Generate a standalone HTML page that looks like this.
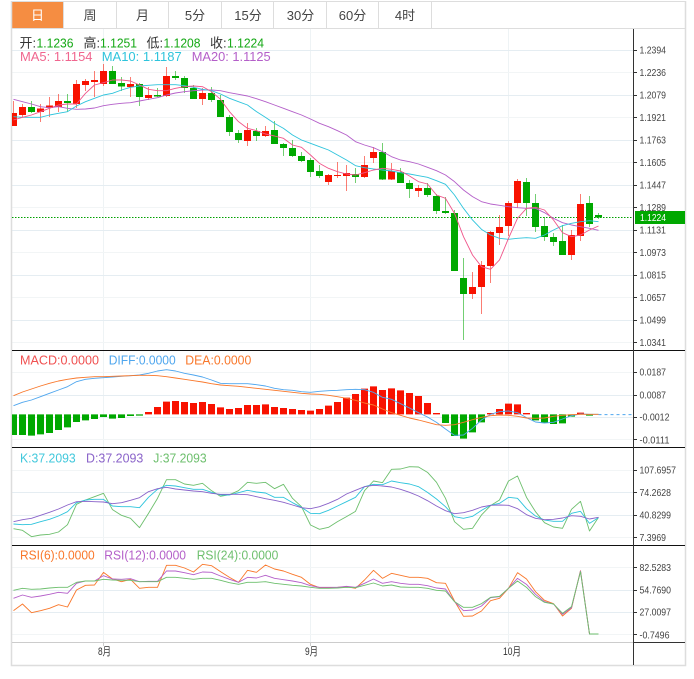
<!DOCTYPE html>
<html>
<head>
<meta charset="utf-8">
<style>
html,body{margin:0;padding:0;background:#fff;width:694px;height:679px;overflow:hidden}
svg{display:block}
text{font-family:"Liberation Sans","Noto Sans CJK SC",sans-serif}
.a{font-size:10px;fill:#444}
.t{font-size:13px;fill:#444;text-anchor:middle}
polyline{fill:none;stroke-width:.9;vector-effect:non-scaling-stroke;stroke-linejoin:round}
</style>
</head>
<body>
<svg width="694" height="679" viewBox="0 0 694 679" xmlns="http://www.w3.org/2000/svg">
<defs><clipPath id="c"><rect x="12" y="29" width="621" height="613"/></clipPath></defs>

<!-- tabs -->
<rect x="12" y="2" width="51" height="26" fill="#f58d42"/>
<path d="M11 1.5H685.5" stroke="#ddd" fill="none"/>
<path d="M11 28.5H685.5M63.5 2V28M116.5 2V28M168.5 2V28M221.5 2V28M273.5 2V28M326.5 2V28M378.5 2V28M431.5 2V28" stroke="#ddd" fill="none"/>
<text class="t" x="37.5" y="20" style="fill:#fff">日</text>
<text class="t" x="90" y="20">周</text>
<text class="t" x="142.5" y="20">月</text>
<text class="t" x="195" y="20">5分</text>
<text class="t" x="248" y="20">15分</text>
<text class="t" x="300.5" y="20">30分</text>
<text class="t" x="352.5" y="20">60分</text>
<text class="t" x="405" y="20">4时</text>

<!-- grid -->
<path stroke="#eef3f5" fill="none" d="M103.5 29V642M310.5 29V642M508.5 29V642"/>
<path stroke="#e5edf2" fill="none" d="M12 50.5H633M12 95.5H633M12 140.5H633M12 185.5H633M12 230.5H633M12 275.5H633M12 320.5H633M12 395.5H633M12 417.5H633M12 492.5H633M12 515.5H633M12 590.5H633M12 612.5H633"/>
<path stroke="#f2f5f6" fill="none" d="M12 72.5H633M12 117.5H633M12 162.5H633M12 207.5H633M12 252.5H633M12 297.5H633M12 342.5H633M12 372.5H633M12 439.5H633M12 470.5H633M12 537.5H633M12 567.5H633M12 634.5H633"/>

<!-- frame -->
<path stroke="#ddd" stroke-width="1.5" fill="none" d="M11.5 1V665.5H685.5V1"/>
<path stroke="#ccc" fill="none" d="M12 642.5H633M103.5 642V646M310.5 642V646M508.5 642V646"/>
<path stroke="#111" fill="none" d="M12 350.5H685M12 447.5H685M12 545.5H685"/>
<path stroke="#333" fill="none" d="M633.5 29V665M633 642.5H685"/>
<path stroke="#333" fill="none" d="M633 50.5h4M633 72.5h4M633 95.5h4M633 117.5h4M633 140.5h4M633 162.5h4M633 185.5h4M633 207.5h4M633 230.5h4M633 252.5h4M633 275.5h4M633 297.5h4M633 320.5h4M633 342.5h4M633 372.5h4M633 395.5h4M633 417.5h4M633 439.5h4M633 470.5h4M633 492.5h4M633 515.5h4M633 537.5h4M633 567.5h4M633 590.5h4M633 612.5h4M633 634.5h4"/>

<g clip-path="url(#c)">
<!-- current price -->
<path d="M12 217.5H633" stroke="#00a000" stroke-dasharray="1.5 1.5" fill="none"/>

<!-- wicks -->
<path stroke="#f81200" stroke-opacity=".55" fill="none" d="M13.5 101V126M22.5 104V117M40.5 104V122M49.5 97V117M58.5 94V112M76.5 80V108M85.5 79V91M94.5 71V97M103.5 64V86M130.5 77V97M148.5 87V100M166.5 67V97M202.5 88V105M247.5 123V146M265.5 126V137M328.5 174V185M337.5 162V178M346.5 165V191M364.5 156V178M373.5 147V163M391.5 163V180M418.5 185V197M472.5 272V299M481.5 261V314M490.5 231V283M499.5 215V245M508.5 201V236M517.5 179V208M571.5 230V260M580.5 194V241"/>
<path stroke="#00a800" stroke-opacity=".55" fill="none" d="M31.5 101V113M67.5 94V112M112.5 66V84M121.5 77V91M139.5 83V106M157.5 88V97M175.5 71V80M184.5 76V93M193.5 85V99M211.5 87V102M220.5 95V117M229.5 115V136M238.5 130V143M256.5 128V141M274.5 121V144M283.5 143V156M292.5 140V157M301.5 152V162M310.5 158V177M319.5 165V178M355.5 168V183M382.5 143V180M400.5 168V183M409.5 180V198M427.5 183V197M436.5 194V214M445.5 197V214M454.5 210V271M463.5 258V340M526.5 178V216M535.5 194V232M544.5 217V241M553.5 233V246M562.5 225V255M589.5 196V227M598.5 213V219"/>
<!-- bodies -->
<path fill="#f81200" d="M10 113h7V126h-7zM19 107h7V115h-7zM37 108.500h7V112h-7zM46 105.500h7V108h-7zM55 101h7V107h-7zM73 84h7V104h-7zM82 81h7V85h-7zM91 80h7V82h-7zM100 71h7V84h-7zM127 84h7V87h-7zM145 95h7V98h-7zM163 76h7V96h-7zM199 93h7V99h-7zM244 130h7V141h-7zM262 131h7V136h-7zM325 175h7V182h-7zM334 175h7V176h-7zM343 173h7V176h-7zM361 165h7V177h-7zM370 152h7V158h-7zM388 171h7V179.500h-7zM415 188h7V191h-7zM469 287h7V294h-7zM478 265h7V287h-7zM487 232h7V266h-7zM496 227h7V233h-7zM505 203h7V226h-7zM514 181h7V203h-7zM568 235h7V255h-7zM577 204h7V236h-7z"/>
<path fill="#00a800" d="M28 107h7V112h-7zM64 101h7V103h-7zM109 71h7V84h-7zM118 83h7V86.500h-7zM136 84h7V97h-7zM154 95h7V96.500h-7zM172 76h7V78h-7zM181 78h7V88h-7zM190 88h7V99h-7zM208 93h7V100h-7zM217 100h7V117h-7zM226 117h7V132h-7zM235 133h7V140h-7zM253 131h7V136h-7zM271 130h7V144h-7zM280 144h7V148h-7zM289 148h7V156h-7zM298 156h7V161h-7zM307 160h7V172h-7zM316 171h7V176h-7zM352 174h7V177h-7zM379 152h7V179.500h-7zM397 172h7V183h-7zM406 183h7V189h-7zM424 188h7V195h-7zM433 196h7V211h-7zM442 211h7V213h-7zM451 213h7V271h-7zM460 278h7V294h-7zM523 182h7V203h-7zM532 203h7V227h-7zM541 226h7V237h-7zM550 237h7V242h-7zM559 241h7V255h-7zM586 203h7V224h-7zM595 215h7V217.500h-7z"/>

<!-- MA lines: y values in 3x coords -->
<g transform="scale(1,.33333)">
<polyline stroke="#b45fc9" points="13.500,298 22.500,305 31.500,312 40.500,320 49.500,323 58.500,320 67.500,325 76.500,328 85.500,327 94.500,324 103.500,317 112.500,313 121.500,310 130.500,308 139.500,303 148.500,298 157.500,293 166.500,285 175.500,279 184.500,275 193.500,272 202.500,270 211.500,270 220.500,272 229.500,278 238.500,283 247.500,288 256.500,296 265.500,305 274.500,315 283.500,325 292.500,335 301.500,345 310.500,357 319.500,370 328.500,380 337.500,392 346.500,405 355.500,425 364.500,435 373.500,443 382.500,455 391.500,470 400.500,480 409.500,485 418.500,492 427.500,502 436.500,512 445.500,525 454.500,545 463.500,570 472.500,590 481.500,605 490.500,612 499.500,616 508.500,620 517.500,623 526.500,625 535.500,625 544.500,638 553.500,655 562.500,668 571.500,675 580.500,680 589.500,685 598.500,691"/>
<polyline stroke="#2ec4dc" points="13.500,350 22.500,352 31.500,352 40.500,352 49.500,345 58.500,340 67.500,335 76.500,318 85.500,305 94.500,295 103.500,285 112.500,280 121.500,270 130.500,262 139.500,258 148.500,256 157.500,254 166.500,254 175.500,254 184.500,257 193.500,262 202.500,268 211.500,272 220.500,282 229.500,295 238.500,305 247.500,315 256.500,335 265.500,352 274.500,370 283.500,385 292.500,405 301.500,420 310.500,430 319.500,440 328.500,450 337.500,465 346.500,480 355.500,497 364.500,503 373.500,507 382.500,510 391.500,513 400.500,518 409.500,522 418.500,527 427.500,532 436.500,542 445.500,553 454.500,585 463.500,625 472.500,660 481.500,688 490.500,705 499.500,715 508.500,718 517.500,715 526.500,713 535.500,715 544.500,705 553.500,690 562.500,677 571.500,670 580.500,665 589.500,662 598.500,665"/>
<polyline stroke="#f0558a" points="13.500,360 22.500,352 31.500,345 40.500,335 49.500,325 58.500,315 67.500,312 76.500,312 85.500,280 94.500,255 103.500,248 112.500,240 121.500,240 130.500,243 139.500,255 148.500,268 157.500,272 166.500,272 175.500,265 184.500,260 193.500,258 202.500,260 211.500,275 220.500,298 229.500,335 238.500,365 247.500,385 256.500,392 265.500,402 274.500,408 283.500,415 292.500,435 301.500,442 310.500,465 319.500,490 328.500,505 337.500,515 346.500,522 355.500,525 364.500,518 373.500,510 382.500,505 391.500,508 400.500,513 409.500,528 418.500,545 427.500,552 436.500,585 445.500,595 454.500,640 463.500,710 472.500,765 481.500,800 490.500,808 499.500,780 508.500,715 517.500,655 526.500,625 535.500,622 544.500,630 553.500,660 562.500,698 571.500,710 580.500,705 589.500,690 598.500,678"/>
</g>

<!-- MACD -->
<g transform="translate(0,345) scale(1,.33333)">
<path fill="#00a800" d="M10 208h7V270h-7zM19 208h7V270h-7zM28 208h7V272h-7zM37 208h7V268h-7zM46 208h7V264h-7zM55 208h7V255h-7zM64 208h7V247h-7zM73 208h7V231h-7zM82 208h7V226h-7zM91 208h7V222h-7zM100 208h7V216h-7zM109 208h7V221h-7zM118 208h7V219h-7zM127 208h7V213h-7zM136 208h7V212h-7zM442 208h7V234h-7zM451 208h7V273h-7zM460 208h7V281h-7zM469 208h7V262h-7zM478 208h7V232h-7zM532 208h7V226h-7zM541 208h7V234h-7zM550 208h7V237h-7zM559 208h7V235h-7zM568 208h7V215h-7zM586 208h7V212h-7z"/>
<path fill="#f81200" d="M145 201h7V208h-7zM154 186h7V208h-7zM163 170h7V208h-7zM172 168h7V208h-7zM181 171h7V208h-7zM190 174h7V208h-7zM199 171h7V208h-7zM208 177h7V208h-7zM217 187h7V208h-7zM226 192h7V208h-7zM235 189h7V208h-7zM244 180h7V208h-7zM253 180h7V208h-7zM262 178h7V208h-7zM271 186h7V208h-7zM280 189h7V208h-7zM289 192h7V208h-7zM298 195h7V208h-7zM307 197h7V208h-7zM316 192h7V208h-7zM325 182h7V208h-7zM334 171h7V208h-7zM343 158h7V208h-7zM352 147h7V208h-7zM361 131h7V208h-7zM370 124h7V208h-7zM379 135h7V208h-7zM388 130h7V208h-7zM397 136h7V208h-7zM406 144h7V208h-7zM415 153h7V208h-7zM424 174h7V208h-7zM433 204h7V208h-7zM487 204h7V208h-7zM496 192h7V208h-7zM505 176h7V208h-7zM514 178h7V208h-7zM523 204h7V208h-7zM577 203h7V208h-7z"/>
<polyline stroke="#4ea6ee" points="13.500,182 22.500,172 31.500,165 40.500,155 49.500,145 58.500,135 67.500,125 76.500,110 85.500,103 94.500,100 103.500,98 112.500,96 121.500,94 130.500,92 139.500,90 148.500,85 157.500,78 166.500,74 175.500,78 184.500,85 193.500,90 202.500,96 211.500,105 220.500,115 229.500,116 238.500,116 247.500,116 256.500,119 265.500,123 274.500,130 283.500,134 292.500,136 301.500,140 310.500,142 319.500,139 328.500,137 337.500,136 346.500,134 355.500,133 364.500,134 373.500,142 382.500,157 391.500,163 400.500,176 409.500,189 418.500,203 427.500,216 436.500,232 445.500,252 454.500,271 463.500,270 472.500,250 481.500,225 490.500,208 499.500,200 508.500,198 517.500,203 526.500,218 535.500,231 544.500,234 553.500,232 562.500,222 571.500,212 580.500,207 589.500,208 598.500,208"/>
<polyline stroke="#f9772a" points="13.500,152 22.500,141 31.500,132 40.500,123 49.500,115 58.500,108 67.500,103 76.500,99 85.500,97 94.500,95 103.500,95 112.500,94 121.500,93 130.500,92 139.500,91 148.500,91 157.500,92 166.500,95 175.500,99 184.500,103 193.500,107 202.500,111 211.500,116 220.500,120 229.500,122 238.500,124 247.500,127 256.500,130 265.500,133 274.500,136 283.500,139 292.500,142 301.500,145 310.500,147 319.500,148 328.500,151 337.500,155 346.500,160 355.500,166 364.500,174 373.500,180 382.500,192 391.500,203 400.500,211 409.500,219 418.500,225 427.500,232 436.500,239 445.500,241 454.500,239 463.500,232 472.500,224 481.500,217 490.500,212 499.500,210 508.500,211 517.500,214 526.500,219 535.500,220 544.500,219 553.500,214 562.500,211 571.500,209 580.500,208 589.500,208 598.500,208"/>
<path stroke="#4ea6ee" stroke-dasharray="3 3" fill="none" d="M598.500 209H633" vector-effect="non-scaling-stroke"/>
</g>

<!-- KDJ -->
<g transform="translate(0,450) scale(1,.33333)">
<polyline stroke="#6dbf6d" points="13.500,236 22.500,241 31.500,260 40.500,255 49.500,253 58.500,246 67.500,224 76.500,163 85.500,150 94.500,140 103.500,130 112.500,179 121.500,196 130.500,205 139.500,233 148.500,190 157.500,145 166.500,89 175.500,89 184.500,102 193.500,106 202.500,100 211.500,122 220.500,139 229.500,134 238.500,122 247.500,97 256.500,100 265.500,97 274.500,116 283.500,103 292.500,145 301.500,170 310.500,225 319.500,238 328.500,232 337.500,215 346.500,200 355.500,184 364.500,122 373.500,93 382.500,98 391.500,58 400.500,57 409.500,50 418.500,51 427.500,67 436.500,97 445.500,145 454.500,215 463.500,238 472.500,235 481.500,195 490.500,167 499.500,150 508.500,93 517.500,78 526.500,142 535.500,185 544.500,218 553.500,231 562.500,235 571.500,178 580.500,154 589.500,243 598.500,202"/>
<polyline stroke="#2ec4dc" points="13.500,222 22.500,224 31.500,223 40.500,215 49.500,208 58.500,198 67.500,185 76.500,158 85.500,150 94.500,148 103.500,148 112.500,168 121.500,170 130.500,170 139.500,173 148.500,142 157.500,118 166.500,106 175.500,108 184.500,113 193.500,118 202.500,118 211.500,127 220.500,135 229.500,135 238.500,128 247.500,121 256.500,126 265.500,129 274.500,142 283.500,142 292.500,158 301.500,172 310.500,190 319.500,191 328.500,181 337.500,168 346.500,155 355.500,142 364.500,110 373.500,103 382.500,104 391.500,93 400.500,98 409.500,102 418.500,110 427.500,127 436.500,147 445.500,170 454.500,200 463.500,205 472.500,199 481.500,181 490.500,166 499.500,160 508.500,142 517.500,145 526.500,176 535.500,198 544.500,210 553.500,214 562.500,214 571.500,190 580.500,184 589.500,220 598.500,203"/>
<polyline stroke="#8a63c9" points="13.500,215 22.500,209 31.500,205 40.500,196 49.500,187 58.500,177 67.500,165 76.500,155 85.500,154 94.500,155 103.500,156 112.500,161 121.500,158 130.500,151 139.500,143 148.500,125 157.500,116 166.500,112 175.500,117 184.500,120 193.500,123 202.500,125 211.500,130 220.500,133 229.500,133 238.500,133 247.500,134 256.500,140 265.500,146 274.500,151 283.500,157 292.500,165 301.500,173 310.500,176 319.500,170 328.500,160 337.500,148 346.500,132 355.500,121 364.500,110 373.500,106 382.500,108 391.500,111 400.500,118 409.500,127 418.500,138 427.500,152 436.500,168 445.500,182 454.500,191 463.500,188 472.500,181 481.500,171 490.500,166 499.500,165 508.500,166 517.500,176 526.500,194 535.500,205 544.500,209 553.500,208 562.500,204 571.500,197 580.500,199 589.500,207 598.500,202"/>
</g>

<!-- RSI -->
<g transform="translate(0,545) scale(1,.33333)">
<polyline stroke="#f9772a" points="13.500,197 22.500,177 31.500,203 40.500,197 49.500,190 58.500,179 67.500,186 76.500,135 85.500,121 94.500,120 103.500,82 112.500,102 121.500,110 130.500,103 139.500,130 148.500,127 157.500,127 166.500,61 175.500,61 184.500,69 193.500,81 202.500,58 211.500,62 220.500,80 229.500,97 238.500,112 247.500,76 256.500,82 265.500,60 274.500,72 283.500,78 292.500,88 301.500,97 310.500,118 319.500,128 328.500,128 337.500,127 346.500,125 355.500,130 364.500,105 373.500,76 382.500,100 391.500,85 400.500,91 409.500,97 418.500,97 427.500,100 436.500,113 445.500,115 454.500,168 463.500,214 472.500,213 481.500,198 490.500,167 499.500,160 508.500,130 517.500,83 526.500,102 535.500,140 544.500,166 553.500,176 562.500,213 571.500,190 580.500,77 589.500,267 598.500,267"/>
<polyline stroke="#b45fc9" points="13.500,160 22.500,150 31.500,157 40.500,153 49.500,148 58.500,142 67.500,145 76.500,115 85.500,108 94.500,108 103.500,92 112.500,102 121.500,103 130.500,101 139.500,110 148.500,109 157.500,109 166.500,78 175.500,78 184.500,83 193.500,89 202.500,81 211.500,82 220.500,93 229.500,103 238.500,112 247.500,97 256.500,99 265.500,91 274.500,100 283.500,104 292.500,108 301.500,113 310.500,122 319.500,127 328.500,127 337.500,127 346.500,124 355.500,127 364.500,115 373.500,102 382.500,115 391.500,110 400.500,115 409.500,118 418.500,118 427.500,122 436.500,129 445.500,132 454.500,170 463.500,197 472.500,195 481.500,183 490.500,158 499.500,155 508.500,130 517.500,100 526.500,118 535.500,148 544.500,170 553.500,177 562.500,208 571.500,188 580.500,78 589.500,267 598.500,267"/>
<polyline stroke="#6dbf6d" points="13.500,136 22.500,130 31.500,133 40.500,132 49.500,129 58.500,127 67.500,127 76.500,112 85.500,108 94.500,108 103.500,103 112.500,105 121.500,106 130.500,106 139.500,110 148.500,110 157.500,110 166.500,97 175.500,97 184.500,100 193.500,103 202.500,100 211.500,100 220.500,106 229.500,113 238.500,118 247.500,112 256.500,112 265.500,110 274.500,115 283.500,118 292.500,121 301.500,123 310.500,127 319.500,130 328.500,130 337.500,129 346.500,127 355.500,128 364.500,121 373.500,114 382.500,123 391.500,120 400.500,126 409.500,127 418.500,127 427.500,130 436.500,136 445.500,138 454.500,170 463.500,187 472.500,187 481.500,176 490.500,157 499.500,154 508.500,130 517.500,108 526.500,127 535.500,155 544.500,172 553.500,177 562.500,205 571.500,185 580.500,80 589.500,267 598.500,267"/>
</g>
</g>

<!-- legends -->
<g>
<text x="19.500" y="47.500" fill="#333" font-size="13">开:</text>
<text x="36.500" y="47.500" fill="#14a814" font-size="13" textLength="37" lengthAdjust="spacingAndGlyphs">1.1236</text>
<text x="83.500" y="47.500" fill="#333" font-size="13">高:</text>
<text x="100" y="47.500" fill="#14a814" font-size="13" textLength="37" lengthAdjust="spacingAndGlyphs">1.1251</text>
<text x="146.500" y="47.500" fill="#333" font-size="13">低:</text>
<text x="163.500" y="47.500" fill="#14a814" font-size="13" textLength="37" lengthAdjust="spacingAndGlyphs">1.1208</text>
<text x="210" y="47.500" fill="#333" font-size="13">收:</text>
<text x="227" y="47.500" fill="#14a814" font-size="13" textLength="37" lengthAdjust="spacingAndGlyphs">1.1224</text>

<text x="20" y="61" fill="#f0668f" font-size="13" textLength="72.500" lengthAdjust="spacingAndGlyphs">MA5: 1.1154</text>
<text x="101.700" y="61" fill="#2ec4dc" font-size="13" textLength="80" lengthAdjust="spacingAndGlyphs">MA10: 1.1187</text>
<text x="191.700" y="61" fill="#b45fc9" font-size="13" textLength="79" lengthAdjust="spacingAndGlyphs">MA20: 1.1125</text>

<text x="20" y="364.700" fill="#f05050" font-size="13" textLength="79" lengthAdjust="spacingAndGlyphs">MACD:0.0000</text>
<text x="108.700" y="364.700" fill="#4ea6ee" font-size="13" textLength="67" lengthAdjust="spacingAndGlyphs">DIFF:0.0000</text>
<text x="185.300" y="364.700" fill="#f9772a" font-size="13" textLength="66" lengthAdjust="spacingAndGlyphs">DEA:0.0000</text>

<text x="20" y="462.700" fill="#41c8dc" font-size="13" textLength="55.700" lengthAdjust="spacingAndGlyphs">K:37.2093</text>
<text x="86" y="462.700" fill="#8a63c9" font-size="13" textLength="57.300" lengthAdjust="spacingAndGlyphs">D:37.2093</text>
<text x="153.300" y="462.700" fill="#6dbf6d" font-size="13" textLength="53.400" lengthAdjust="spacingAndGlyphs">J:37.2093</text>

<text x="20" y="559.300" fill="#f9772a" font-size="13" textLength="74.700" lengthAdjust="spacingAndGlyphs">RSI(6):0.0000</text>
<text x="104.300" y="559.300" fill="#b45fc9" font-size="13" textLength="81.700" lengthAdjust="spacingAndGlyphs">RSI(12):0.0000</text>
<text x="196.700" y="559.300" fill="#6dbf6d" font-size="13" textLength="81.600" lengthAdjust="spacingAndGlyphs">RSI(24):0.0000</text>
</g>

<!-- y axis labels -->
<g>
<text class="a" x="639.500" y="53.500" textLength="26.500" lengthAdjust="spacingAndGlyphs">1.2394</text>
<text class="a" x="639.500" y="76" textLength="26.500" lengthAdjust="spacingAndGlyphs">1.2236</text>
<text class="a" x="639.500" y="98.500" textLength="26.500" lengthAdjust="spacingAndGlyphs">1.2079</text>
<text class="a" x="639.500" y="121" textLength="26.500" lengthAdjust="spacingAndGlyphs">1.1921</text>
<text class="a" x="639.500" y="143.500" textLength="26.500" lengthAdjust="spacingAndGlyphs">1.1763</text>
<text class="a" x="639.500" y="166" textLength="26.500" lengthAdjust="spacingAndGlyphs">1.1605</text>
<text class="a" x="639.500" y="188.500" textLength="26.500" lengthAdjust="spacingAndGlyphs">1.1447</text>
<text class="a" x="639.500" y="211" textLength="26.500" lengthAdjust="spacingAndGlyphs">1.1289</text>
<text class="a" x="639.500" y="233.500" textLength="26.500" lengthAdjust="spacingAndGlyphs">1.1131</text>
<text class="a" x="639.500" y="256" textLength="26.500" lengthAdjust="spacingAndGlyphs">1.0973</text>
<text class="a" x="639.500" y="278.500" textLength="26.500" lengthAdjust="spacingAndGlyphs">1.0815</text>
<text class="a" x="639.500" y="301" textLength="26.500" lengthAdjust="spacingAndGlyphs">1.0657</text>
<text class="a" x="639.500" y="323.500" textLength="26.500" lengthAdjust="spacingAndGlyphs">1.0499</text>
<text class="a" x="639.500" y="346" textLength="26.500" lengthAdjust="spacingAndGlyphs">1.0341</text>
<text class="a" x="639.500" y="375.500" textLength="26.500" lengthAdjust="spacingAndGlyphs">0.0187</text>
<text class="a" x="639.500" y="398.500" textLength="26.500" lengthAdjust="spacingAndGlyphs">0.0087</text>
<text class="a" x="639.500" y="420.500" textLength="30" lengthAdjust="spacingAndGlyphs">-0.0012</text>
<text class="a" x="639.500" y="443.500" textLength="30" lengthAdjust="spacingAndGlyphs">-0.0111</text>
<text class="a" x="639.500" y="473.500" textLength="36.500" lengthAdjust="spacingAndGlyphs">107.6957</text>
<text class="a" x="639.500" y="496" textLength="31.500" lengthAdjust="spacingAndGlyphs">74.2628</text>
<text class="a" x="639.500" y="518.500" textLength="31.500" lengthAdjust="spacingAndGlyphs">40.8299</text>
<text class="a" x="639.500" y="541" textLength="26.500" lengthAdjust="spacingAndGlyphs">7.3969</text>
<text class="a" x="639.500" y="571" textLength="31.500" lengthAdjust="spacingAndGlyphs">82.5283</text>
<text class="a" x="639.500" y="593.500" textLength="31.500" lengthAdjust="spacingAndGlyphs">54.7690</text>
<text class="a" x="639.500" y="615.500" textLength="31.500" lengthAdjust="spacingAndGlyphs">27.0097</text>
<text class="a" x="639.500" y="638.500" textLength="30" lengthAdjust="spacingAndGlyphs">-0.7496</text>
</g>

<!-- price tag -->
<rect x="635" y="211" width="50" height="13" fill="#00a800"/>
<text x="640" y="221" font-size="10" fill="#fff" textLength="26" lengthAdjust="spacingAndGlyphs">1.1224</text>

<!-- x axis labels -->
<text x="98" y="655" font-size="11" fill="#333" textLength="13" lengthAdjust="spacingAndGlyphs">8月</text>
<text x="305" y="655" font-size="11" fill="#333" textLength="13" lengthAdjust="spacingAndGlyphs">9月</text>
<text x="503" y="655" font-size="11" fill="#333" textLength="18" lengthAdjust="spacingAndGlyphs">10月</text>
</svg>
</body>
</html>
